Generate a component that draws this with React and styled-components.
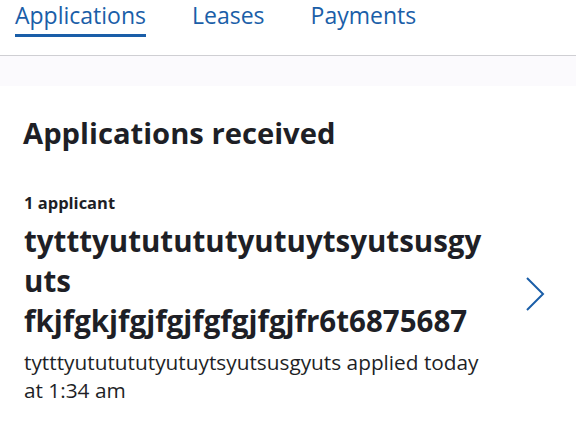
import styled, { createGlobalStyle } from "styled-components";

const GlobalStyle = createGlobalStyle`
  html, body {
    margin: 0;
    padding: 0;
    background: #fff;
    font-family: "Open Sans", "Noto Sans", sans-serif;
    color: #1e1f26;
  }
`;

const Page = styled.div`
  width: 576px;
  height: 432px;
  overflow: hidden;
`;

const TabBar = styled.nav`
  display: flex;
  gap: 46px;
  padding: 0 0 0 15px;
  height: 56px;
  border-bottom: 1px solid #cfcfd3;
  box-sizing: border-box;
`;

const Tab = styled.div`
  font-size: 23px;
  line-height: 30px;
  color: #1a5ea8;
  height: 37px;
  box-sizing: border-box;
  border-bottom: 3px solid ${({ $active }) => ($active ? "#1a5ea8" : "transparent")};
`;

const Band = styled.div`
  height: 30px;
  background: #fbfafd;
`;

const Content = styled.main`
  padding: 27px 31px 0 23px;
`;

const Heading = styled.h1`
  margin: 0;
  font-size: 29.2px;
  line-height: 40px;
  font-weight: 700;
`;

const Row = styled.div`
  display: flex;
  align-items: center;
  margin-top: 38px;
`;

const Info = styled.div`
  flex: 1;
  padding-left: 1px;
`;

const Count = styled.div`
  font-size: 16.5px;
  line-height: 24px;
  font-weight: 700;
`;

const Name = styled.div`
  width: 466px;
  margin-top: 6px;
  font-size: 29.5px;
  line-height: 40px;
  font-weight: 700;
  overflow-wrap: anywhere;
`;

const Meta = styled.div`
  width: 462px;
  margin-top: 7px;
  font-size: 20.8px;
  line-height: 28px;
`;

const Chevron = styled.svg`
  flex: none;
  width: 20px;
  height: 36px;
  margin-top: -8px;
`;

export default function App() {
  return (
    <Page>
      <GlobalStyle />
      <TabBar>
        <Tab $active>Applications</Tab>
        <Tab>Leases</Tab>
        <Tab>Payments</Tab>
      </TabBar>
      <Band />
      <Content>
        <Heading>Applications received</Heading>
        <Row>
          <Info>
            <Count>1 applicant</Count>
            <Name>
              tytttyututututyutuytsyutsusgyuts fkjfgkjfgjfgjfgfgjfgjfr6t6875687
            </Name>
            <Meta>tytttyututututyutuytsyutsusgyuts applied today at 1:34 am</Meta>
          </Info>
          <Chevron viewBox="0 0 20 36" fill="none">
            <path d="M2 2 L18 18 L2 34" stroke="#1a5ea8" strokeWidth="2" />
          </Chevron>
        </Row>
      </Content>
    </Page>
  );
}
